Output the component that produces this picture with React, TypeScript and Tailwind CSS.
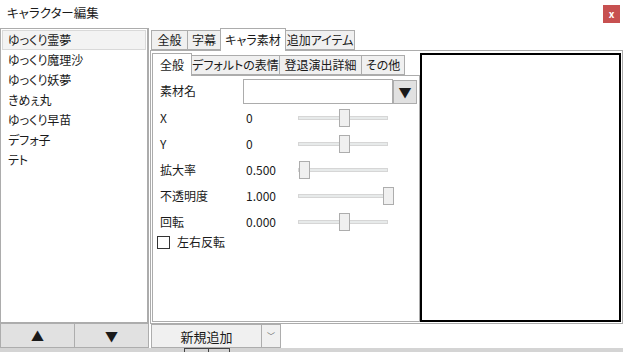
import React from 'react';

const CHARACTERS = ['ゆっくり霊夢', 'ゆっくり魔理沙', 'ゆっくり妖夢', 'きめぇ丸', 'ゆっくり早苗', 'デフォ子', 'テト'];

const MAIN_TABS = [
    { label: '全般', w: 'w-[37px]' },
    { label: '字幕', w: 'w-[34px]' },
    { label: 'キャラ素材', w: 'w-[66px]', active: true },
    { label: '追加アイテム', w: 'w-[70px]' },
];

const SUB_TABS = [
    { label: '全般', w: 'w-[40px]', active: true },
    { label: 'デフォルトの表情', w: 'w-[89px]' },
    { label: '登退演出詳細', w: 'w-[83px]' },
    { label: 'その他', w: 'w-[44px]' },
];

// thumb offset from the track's left edge, px
const SLIDERS = [
    { label: 'X', value: '0', pos: 'left-[40px]' },
    { label: 'Y', value: '0', pos: 'left-[40px]' },
    { label: '拡大率', value: '0.500', pos: 'left-[0px]' },
    { label: '不透明度', value: '1.000', pos: 'left-[84px]' },
    { label: '回転', value: '0.000', pos: 'left-[40px]' },
];

function Tab({ label, w, active }: { label: string; w: string; active?: boolean }) {
    return (
        <div
            className={
                active
                    ? `${w} h-[23px] -mb-px -mr-px relative z-10 bg-white border border-b-0 border-[#acacac] flex items-center justify-center`
                    : `${w} h-[20px] -mr-px bg-[#f0f0f0] border border-[#acacac] flex items-center justify-center`
            }
        >
            {label}
        </div>
    );
}

function Slider({ pos }: { pos: string }) {
    return (
        <div className="relative w-[90px] h-[4px] bg-[#e7eaea] border border-[#d6d6d6]">
            <div className={`absolute ${pos} -top-[8px] w-[11px] h-[18px] bg-[#f0f0f0] border border-[#adadad]`} />
        </div>
    );
}

export default function App() {
    return (
        <div className="w-[623px] h-[352px] bg-white text-[12px] leading-none text-[#1a1a1a] font-['Noto_Sans_CJK_JP','Noto_Sans',sans-serif] [font-feature-settings:'palt'] flex flex-col overflow-hidden">
            {/* タイトル */}
            <div className="h-[28px] flex items-start justify-between pl-[7px] pr-[3px]">
                <span className="mt-[7px] text-[12.5px]">キャラクター編集</span>
                <div className="mt-[5px] w-[17px] h-[18px] bg-[#c75050] text-white text-[10px] font-bold flex items-center justify-center">x</div>
            </div>

            <div className="flex h-[320px]">
                {/* キャラ一覧 */}
                <div className="w-[149px] flex flex-col">
                    <div className="flex-1 border border-[#acacac] border-r-2 p-px flex flex-col">
                        {CHARACTERS.map((c, i) => (
                            <div
                                key={c}
                                className={
                                    i === 0
                                        ? 'h-[20px] pl-[5px] flex items-center bg-[#f3f3f3] border border-[#d9d9d9]'
                                        : 'h-[20px] pl-[6px] flex items-center'
                                }
                            >
                                {c}
                            </div>
                        ))}
                    </div>
                    <div className="h-[25px] flex">
                        <button className="flex-1 bg-[#e1e1e1] border border-[#adadad] text-[13px] flex items-center justify-center">▲</button>
                        <button className="flex-1 -ml-px bg-[#e1e1e1] border border-[#adadad] text-[13px] flex items-center justify-center">▼</button>
                    </div>
                </div>

                {/* 右側 */}
                <div className="flex-1 flex flex-col pl-px">
                    <div className="h-[22px] flex items-end pl-px">
                        {MAIN_TABS.map(t => (
                            <Tab key={t.label} {...t} />
                        ))}
                    </div>
                    <div className="h-[275px] border border-[#acacac] flex pl-px pt-[2px] pb-px pr-px">
                        <div className="w-[268px] flex flex-col">
                            <div className="h-[22px] flex items-end">
                                {SUB_TABS.map(t => (
                                    <Tab key={t.label} {...t} />
                                ))}
                            </div>
                            <div className="flex-1 border border-[#acacac] pt-[2px] flex flex-col">
                                <div className="h-[26px] flex items-center">
                                    <span className="w-[90px] pl-[7px]">素材名</span>
                                    <div className="w-[150px] h-[25px] border border-[#acacac] bg-white" />
                                    <div className="w-[24px] h-[24px] mt-px bg-[#e1e1e1] border border-[#adadad] flex items-center justify-center text-[13px]">▼</div>
                                </div>
                                <div className="h-px" />
                                {SLIDERS.map(s => (
                                    <div key={s.label} className="h-[26px] flex items-center">
                                        <span className="w-[93px] pl-[7px]">{s.label}</span>
                                        <span className="w-[52px]">{s.value}</span>
                                        <Slider pos={s.pos} />
                                    </div>
                                ))}
                                <div className="h-[14px] flex items-center pl-[4px] gap-[7px]">
                                    <div className="w-[13px] h-[13px] border border-[#333]" />
                                    <span>左右反転</span>
                                </div>
                            </div>
                        </div>
                        <div className="flex-1 border-2 border-black bg-white" />
                    </div>
                    <div className="h-[24px] flex pl-px">
                        <button className="w-[111px] bg-[#f0f0f0] border border-[#adadad] text-[13px] flex items-center justify-center">新規追加</button>
                        <button className="w-[20px] -ml-px bg-[#f0f0f0] border border-[#adadad] text-[8px] text-[#555] flex items-center justify-center">﹀</button>
                    </div>
                </div>
            </div>
            <div className="h-[4px] bg-[#d4d4d4] flex">
                <div className="ml-[184px] w-[46px] h-[4px] border-x border-t border-[#444] flex">
                    <div className="ml-[23px] w-px bg-[#444]" />
                </div>
            </div>
        </div>
    );
}
